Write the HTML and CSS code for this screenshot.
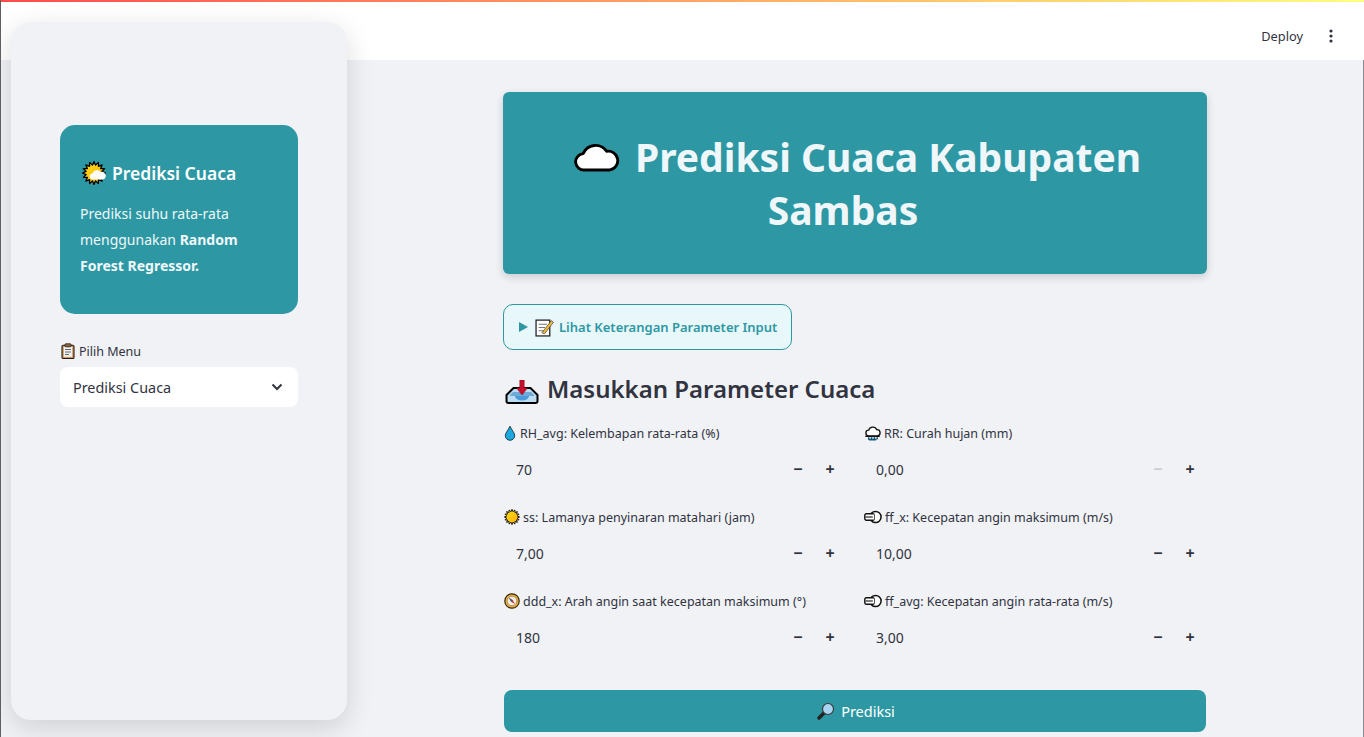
FILE: index.html
```html
<!DOCTYPE html>
<html lang="id">
<head>
<meta charset="utf-8">
<title>Prediksi Cuaca</title>
<link rel="stylesheet" href="styles.css">
</head>
<body>
<svg class="defs" width="0" height="0">
  <defs>
    <linearGradient id="sung" x1="0" y1="0" x2="1" y2="1"><stop offset="0" stop-color="#ffe21a"/><stop offset="1" stop-color="#f7a800"/></linearGradient>
    <symbol id="sun" viewBox="0 0 24 24"><polygon points="12,.5 13.56,4.15 16.4,1.4 16.45,5.35 20.1,3.9 18.65,7.55 22.6,7.6 19.85,10.44 23.5,12 19.85,13.56 22.6,16.4 18.65,16.45 20.1,20.1 16.45,18.65 16.4,22.6 13.56,19.85 12,23.5 10.44,19.85 7.6,22.6 7.55,18.65 3.9,20.1 5.35,16.45 1.4,16.4 4.15,13.56 .5,12 4.15,10.44 1.4,7.6 5.35,7.55 3.9,3.9 7.55,5.35 7.6,1.4 10.44,4.15" fill="url(#sung)" stroke="#000" stroke-width="1.300" stroke-linejoin="round"/></symbol>
    <symbol id="wind" viewBox="0 0 18 14"><circle cx="11.500" cy="7" r="5.600" fill="#fff" stroke="#111" stroke-width="1.500"/><rect x=".8" y="3.800" width="9.400" height="6.400" rx="1.500" fill="#fff" stroke="#111" stroke-width="1.400"/><path d="M1.500 7h8" stroke="#111" stroke-width="1.100"/><path d="M9.500 4.600v4.800" stroke="#fff" stroke-width="1.400"/></symbol>
  </defs>
</svg>
<div class="topline"></div>
<header class="header">
  <span class="deploy">Deploy</span>
  <svg class="kebab" width="4" height="14" viewBox="0 0 4 14"><circle cx="2" cy="2" r="1.600"/><circle cx="2" cy="7" r="1.600"/><circle cx="2" cy="12" r="1.600"/></svg>
</header>

<aside class="sidebar">
  <div class="side-card">
    <h3 class="side-title">
      <svg class="ic-title" viewBox="0 0 24 24"><use href="#sun" width="24" height="24"/><path d="M11 18.500a3 3 0 0 1-.5-6 4.500 4.500 0 0 1 8-1.500 3.800 3.800 0 0 1 2.500 7.500z" fill="#fff"/></svg>
      <span>Prediksi Cuaca</span>
    </h3>
    <p class="side-text">Prediksi suhu rata-rata menggunakan <b>Random Forest Regressor.</b></p>
  </div>
  <label class="side-label">
    <svg class="ic16" viewBox="0 0 16 16"><rect x="2" y="2.200" width="12" height="13.300" rx="1.200" fill="#c99a66" stroke="#2a1a10" stroke-width="1.100"/><rect x="3.800" y="3.800" width="8.400" height="10" fill="#f2f2f2"/><rect x="5" y=".8" width="6" height="3" rx=".8" fill="#8a6a48" stroke="#2a1a10" stroke-width=".8"/><path d="M5 6.500h6M5 9h6M5 11.500h4" stroke="#666" stroke-width="1"/></svg>
    <span>Pilih Menu</span>
  </label>
  <div class="select">
    <span>Prediksi Cuaca</span>
    <svg width="12" height="8" viewBox="0 0 12 8"><path d="M1.500 1.500L6 6l4.500-4.500" fill="none" stroke="#31333f" stroke-width="2"/></svg>
  </div>
</aside>

<main class="main">
  <section class="hero">
    <h1 class="hero-title">
      <svg class="cloud" viewBox="0 0 48 30"><path d="M11 28a8.500 8.500 0 0 1-1.500-17A14 14 0 0 1 34 8.500 9.500 9.500 0 0 1 37.500 28z" fill="#fff" stroke="#000" stroke-width="3" stroke-linejoin="round"/></svg>
      Prediksi Cuaca Kabupaten Sambas
    </h1>
  </section>

  <div class="expander">
    <svg width="9" height="10" viewBox="0 0 9 10"><path d="M0 0l9 5-9 5z" fill="#2d98a4"/></svg>
    <svg class="ic-memo" viewBox="0 0 18 18"><rect x="1" y="2" width="13" height="15" fill="#fff" stroke="#222" stroke-width="1.200"/><path d="M3.500 6h8M3.500 9h6M3.500 12h5" stroke="#777"/><path d="M6.500 14L15.500 2.500l2 1.500L9 15z" fill="#f0b93a" stroke="#333" stroke-width=".6"/></svg>
    <span>Lihat Keterangan Parameter Input</span>
  </div>

  <h2 class="section-title">
    <svg class="inbox" viewBox="0 0 34 24"><path d="M1.500 21v-6l7-7h17l7 7v6a2 2 0 0 1-2 2h-27a2 2 0 0 1-2-2z" fill="#bcdcf2" stroke="#000" stroke-width="2"/><path d="M8 12h18l3 3v1H5v-1z" fill="#6fa9d6"/><path d="M10 16a7 4.500 0 0 0 14 0z" fill="#4a9bdc"/><path d="M14.800 0h4.400v8h3.300L17 15l-5.500-7h3.300z" fill="#c8102e" stroke="#7a0a1c" stroke-width=".5"/></svg>
    <span>Masukkan Parameter Cuaca</span>
  </h2>

  <div class="grid">
    <div class="field">
      <div class="flabel"><svg class="ic-drop" viewBox="0 0 14 18"><path d="M7 1C5 6 1.500 8.500 1.500 12a5.500 5.500 0 0 0 11 0C12.500 8.500 9 6 7 1z" fill="#1ea7dd" stroke="#0b2a3a" stroke-width="1"/></svg><span>RH_avg: Kelembapan rata-rata (%)</span></div>
      <div class="num"><span class="val">70</span><span class="btn">−</span><span class="btn">+</span></div>
    </div>
    <div class="field">
      <div class="flabel"><svg class="ic-rain" viewBox="0 0 18 16"><path d="M2 11.500h14" stroke="#111" stroke-width="1.600" stroke-linecap="round"/><path d="M4 14h10l-1.500 2h-7z" fill="#0f5f8c"/><path d="M5 11a3 3 0 0 1 0-6 4.500 4.500 0 0 1 8.500-.5 3.200 3.200 0 0 1 .5 6.500z" fill="#fff" stroke="#111" stroke-width="1.400"/><path d="M5 12.500v2.500M8 12.500v3M11 12.500v3M14 12.500v2" stroke="#14506f" stroke-width="1.500"/></svg><span>RR: Curah hujan (mm)</span></div>
      <div class="num"><span class="val">0,00</span><span class="btn off">−</span><span class="btn">+</span></div>
    </div>
    <div class="field">
      <div class="flabel"><svg class="ic16" viewBox="0 0 24 24"><use href="#sun" width="24" height="24"/></svg><span>ss: Lamanya penyinaran matahari (jam)</span></div>
      <div class="num"><span class="val">7,00</span><span class="btn">−</span><span class="btn">+</span></div>
    </div>
    <div class="field">
      <div class="flabel"><svg class="ic-wind"><use href="#wind"/></svg><span>ff_x: Kecepatan angin maksimum (m/s)</span></div>
      <div class="num"><span class="val">10,00</span><span class="btn">−</span><span class="btn">+</span></div>
    </div>
    <div class="field">
      <div class="flabel"><svg class="ic16" viewBox="0 0 16 16"><circle cx="8" cy="8" r="7.200" fill="#e3b04b" stroke="#3a2800" stroke-width="1.200"/><circle cx="8" cy="8" r="4.800" fill="#f3efe6" stroke="#a87a20" stroke-width=".7"/><path d="M4.800 4.800l4 2.400 2.400 4-4-2.400z" fill="#c33"/><path d="M4.800 4.800l2.400 4 1.600-1.600z" fill="#3a5a88"/></svg><span>ddd_x: Arah angin saat kecepatan maksimum (°)</span></div>
      <div class="num"><span class="val">180</span><span class="btn">−</span><span class="btn">+</span></div>
    </div>
    <div class="field">
      <div class="flabel"><svg class="ic-wind"><use href="#wind"/></svg><span>ff_avg: Kecepatan angin rata-rata (m/s)</span></div>
      <div class="num"><span class="val">3,00</span><span class="btn">−</span><span class="btn">+</span></div>
    </div>
  </div>

  <button class="predict">
    <svg class="ic-lens" viewBox="0 0 18 18"><path d="M7 11l-5 5" stroke="#222" stroke-width="3.500" stroke-linecap="round"/><circle cx="11" cy="7" r="5.500" fill="#a9d4f2" stroke="#3a3a3a" stroke-width="1.200"/></svg>
    <span>Prediksi</span>
  </button>
</main>
</body>
</html>
```
FILE: styles.css
```css
* { box-sizing: border-box; }
html, body { height: 100%; }
body {
  margin: 0;
  height: 737px;
  overflow: hidden;
  background: #f0f2f6;
  color: #31333f;
  font-family: "Noto Sans", "Open Sans", sans-serif;
  position: relative;
  border-left: 1px solid #5f5f5f;
}
body::after {
  content: "";
  position: absolute;
  top: 60px;
  right: 0;
  bottom: 0;
  width: 1px;
  background: #8a8a90;
}
.defs { position: absolute; }
.topline {
  height: 2px;
  background: linear-gradient(90deg, #ff4b4b, #fffd80);
}
.header {
  height: 58px;
  background: #fff;
  display: flex;
  align-items: center;
  justify-content: flex-end;
  gap: 26px;
  padding: 10px 31px 0 0;
}
.deploy { font-size: 12.800px; color: #31333f; }
.kebab { fill: #31333f; }

.sidebar {
  position: absolute;
  left: 10px;
  top: 22px;
  width: 336px;
  height: 698px;
  background: #f0f2f6;
  border-radius: 20px;
  box-shadow: 0 8px 28px rgba(0,0,0,.14);
  padding: 103px 49px 0;
}
.side-card {
  height: 189px;
  background: #2d98a4;
  border-radius: 15px;
  padding: 36px 20px 0;
  color: #f0f7fa;
}
.side-title {
  margin: 0 0 16px;
  font-size: 17.500px;
  line-height: 24px;
  font-weight: 600;
  display: flex;
  align-items: center;
  gap: 6px;
  color: #fff;
}
.ic-title { width: 24px; height: 24px; flex: none; margin-left: 2px; }
.side-text { margin: 0; font-size: 14px; line-height: 26px; }
.side-text b { font-weight: 700; }
.side-label { display: flex; align-items: center; gap: 3px; margin-top: 27px; height: 20px; font-size: 12.500px; }
.select {
  margin-top: 6px;
  height: 40px;
  background: #fff;
  border-radius: 8px;
  padding: 0 15px 0 13px;
  display: flex;
  align-items: center;
  justify-content: space-between;
  font-size: 14.400px;
}
.ic16 { width: 16px; height: 16px; flex: none; }
.ic-rain { width: 17px; height: 16px; flex: none; }
.ic-memo { width: 19px; height: 19px; flex: none; }
.ic-lens { width: 18px; height: 18px; flex: none; }
.ic-drop { width: 12px; height: 16px; flex: none; margin-right: 1px; }
.ic-wind { width: 18px; height: 14px; flex: none; }

.main {
  width: 704px;
  margin: 32px 0 0 502px;
}
.hero {
  height: 182px;
  background: #2d98a4;
  border-radius: 6px;
  box-shadow: 0 3px 8px rgba(0,0,0,.16);
  padding: 38px 60px 0 36px;
  text-align: center;
}
.hero-title {
  margin: 0;
  font-size: 39px;
  line-height: 53px;
  font-weight: 700;
  color: #f0f7fa;
}
.cloud { width: 46px; height: 29px; vertical-align: 0; margin: 0 5px 0 29px; }
.expander {
  margin-top: 30px;
  width: 289px;
  height: 46px;
  border: 1px solid #2d98a4;
  border-radius: 10px;
  background: #e8f7f9;
  display: flex;
  align-items: center;
  padding-left: 15px;
  gap: 7px;
  color: #2d98a4;
  font-size: 13px;
  font-weight: 600;
}
.expander span { margin-left: -2px; }
.section-title {
  margin: 20px 0 0 2px;
  height: 36px;
  display: flex;
  align-items: center;
  gap: 8px;
  font-size: 24px;
  font-weight: 600;
}
.inbox { width: 34px; height: 24px; flex: none; margin-top: 8px; }
.grid {
  margin-top: 17px;
  margin-left: 1px;
  display: grid;
  grid-template-columns: 344px 344px;
  column-gap: 16px;
  row-gap: 16px;
}
.field { height: 68px; }
.flabel { height: 20px; display: flex; align-items: center; gap: 3px; font-size: 12.500px; }
.num { margin-top: 6px; height: 40px; display: flex; align-items: center; font-size: 14px; padding: 0 2px 0 12px; }
.val { flex: 1; }
.btn { width: 32px; text-align: center; font-weight: 700; font-size: 16px; }
.btn.off { color: #c9ccd2; }
.predict {
  margin: 31px 0 0 1px;
  width: 702px;
  height: 42px;
  border: 0;
  border-radius: 8px;
  padding: 0 0 0 2px;
  background: #2d98a4;
  color: #fff;
  display: flex;
  align-items: center;
  justify-content: center;
  gap: 6px;
  font: 14.500px "Noto Sans", sans-serif;
}
```
